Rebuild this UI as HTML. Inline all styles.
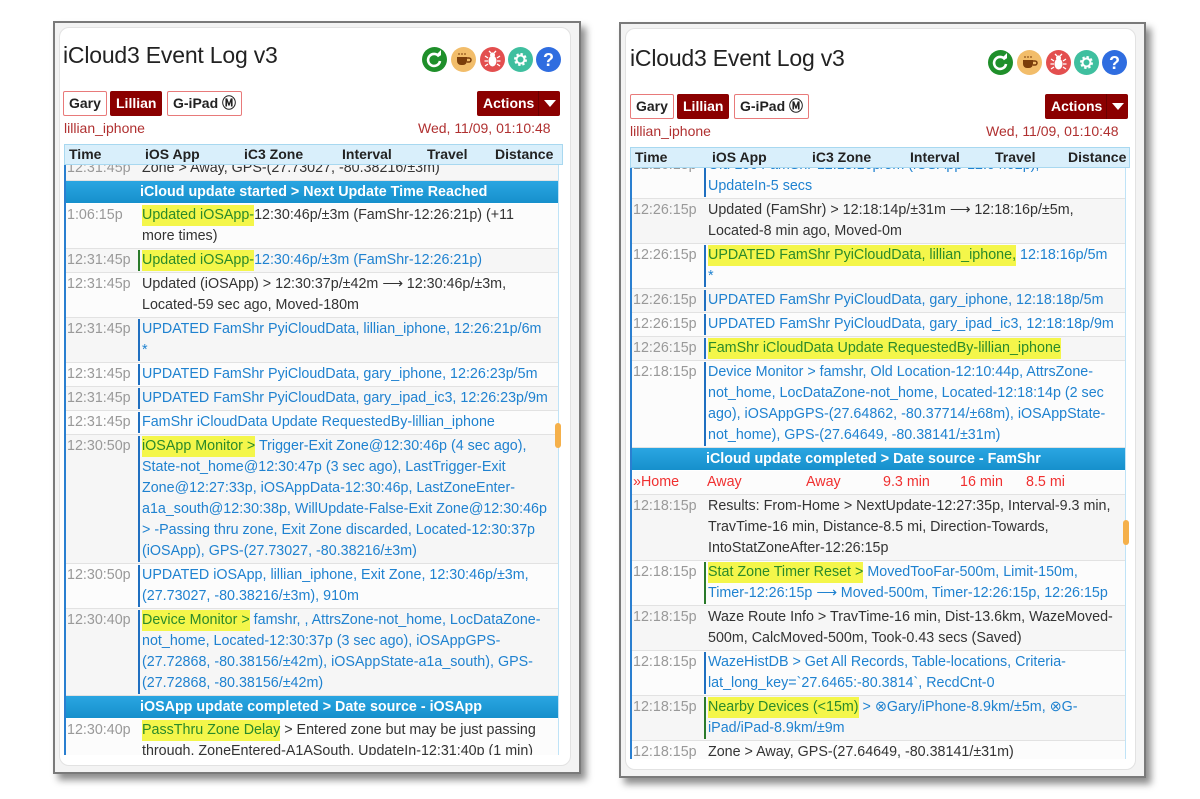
<!DOCTYPE html>
<html><head><meta charset="utf-8">
<style>
*{box-sizing:border-box;margin:0;padding:0}
body{width:1200px;height:799px;background:#fff;position:relative;overflow:hidden;font-family:"Liberation Sans",Arial,sans-serif;}
.frame{position:absolute;border:2px solid #7a7a7a;background:#f3f3f3;box-shadow:5px 6px 7px rgba(0,0,0,.45);}
.card{position:absolute;left:4px;top:4px;right:8px;bottom:6px;background:#fff;border:1px solid #e2e2e2;border-radius:10px;}
.title{position:absolute;font-size:23px;color:#222;letter-spacing:-0.2px}
.ic{position:absolute;width:25px;height:25px;border-radius:50%;}
.btn{position:absolute;height:25px;font-size:14px;font-weight:bold;line-height:23px;padding:0 5px;border-radius:2px}
.b1{background:#fff;border:1px solid #e87a7a;color:#222}
.b2{background:#8b0000;border:1px solid #8b0000;color:#fff}
.act{position:absolute;height:25px;width:83px;background:#8b0000;border-radius:2px;color:#fff;font-weight:bold;font-size:14px;line-height:25px;padding-left:6px}
.act i{position:absolute;right:0;top:0;width:22px;height:25px;border-left:1px solid #6b0000}
.act i:after{content:"";position:absolute;left:5px;top:9px;border-left:6px solid transparent;border-right:6px solid transparent;border-top:7px solid #fff}
.dev{position:absolute;font-size:14px;color:#b03030}
.date{position:absolute;font-size:14px;color:#b03030}
.hdr{position:absolute;height:21px;background:#d9effb;border:1px solid #a8d8f0;font-size:14px;font-weight:bold;color:#222;line-height:19px}
.hdr span{position:absolute;top:0}
.body{position:absolute;overflow:hidden;border-left:2px solid #2a7fd0;border-right:1px solid #bfe3f7;}
.row{display:flex;line-height:21px;padding:1px 0;border-bottom:1px solid #e2e2e2;font-size:14.3px;background:#f6f6f6}
.row.w{background:#fcfcfc}
.t{width:72px;flex:none;color:#999;padding-left:1px;white-space:nowrap}
.m{flex:1;padding-left:2px;white-space:nowrap;color:#333;border-left:2px solid transparent}
.m.bl{color:#1f82d0;border-left-color:#1f6fc0}
.m.g{border-left-color:#2a7a2a}
.hl{background:#f4f64a;color:#2a8a2a;padding:2px 0 3px}
.bar{background:linear-gradient(#2aa6e2,#1690cc);color:#fff;font-weight:bold;font-size:14.3px;line-height:21px;padding-left:74px;border-bottom:1px solid #fff;height:23px;padding-top:1px}
.red{color:#f03030;position:relative;height:24px}
.red span{position:absolute;top:1px}
.thumb{position:absolute;width:6px;height:25px;border-radius:3px;background:#f5b04a}
</style></head><body>

<!-- LEFT PANEL -->
<div class="frame" style="left:53px;top:21px;width:528px;height:753px"><div class="card"></div></div>
<div class="title" style="left:63px;top:42px">iCloud3 Event Log v3</div>
<div class="ic" style="left:422px;top:47px;background:#1f8f2a"><svg width="25" height="25" viewBox="0 0 25 25"><path d="M17 9.5A6 6 0 1 0 18 14" fill="none" stroke="#fff" stroke-width="2.6"/><path d="M13.5 8.5h5.5v-5.5z" fill="#fff"/></svg></div>
<div class="ic" style="left:451px;top:47px;background:#f2bd6a"><svg width="25" height="25" viewBox="0 0 25 25"><path d="M6 10h10v4a4 4 0 0 1-4 4h-2a4 4 0 0 1-4-4z" fill="#7a3d0a"/><path d="M16 11h2a2 2 0 0 1 0 4h-2" fill="none" stroke="#7a3d0a" stroke-width="1.5"/><path d="M8 6v2M11 6v2M14 6v2" stroke="#7a3d0a"/></svg></div>
<div class="ic" style="left:480px;top:47px;background:#e34f4f"><svg width="25" height="25" viewBox="0 0 25 25"><ellipse cx="12.5" cy="14" rx="4" ry="5.5" fill="#fff"/><circle cx="12.5" cy="8" r="2.5" fill="#fff"/><path d="M8 11l-3-2M8 14H4.5M8 17l-3 2M17 11l3-2M17 14h3.5M17 17l3 2M11 6l-2-2M14 6l2-2" stroke="#fff" stroke-width="1.3"/></svg></div>
<div class="ic" style="left:508px;top:47px;background:#3fbf9f"><svg width="25" height="25" viewBox="0 0 25 25"><circle cx="12.5" cy="12.5" r="5" fill="none" stroke="#fff" stroke-width="3" stroke-dasharray="2.2 1.7"/><circle cx="12.5" cy="12.5" r="4" fill="none" stroke="#fff" stroke-width="2"/></svg></div>
<div class="ic" style="left:536px;top:47px;background:#2f6de0"><svg width="25" height="25" viewBox="0 0 25 25"><text x="12.5" y="19" text-anchor="middle" font-family="Liberation Sans" font-weight="bold" font-size="18" fill="#fff">?</text></svg></div>
<div class="btn b1" style="left:63px;top:91px">Gary</div>
<div class="btn b2" style="left:110px;top:91px">Lillian</div>
<div class="btn b1" style="left:167px;top:91px">G-iPad Ⓜ</div>
<div class="act" style="left:477px;top:91px">Actions<i></i></div>
<div class="dev" style="left:64px;top:120px">lillian_iphone</div>
<div class="date" style="left:418px;top:120px">Wed, 11/09, 01:10:48</div>
<div class="hdr" style="left:64px;top:144px;width:499px"><span style="left:4px">Time</span><span style="left:80px">iOS App</span><span style="left:179px">iC3 Zone</span><span style="left:277px">Interval</span><span style="left:362px">Travel</span><span style="left:430px">Distance</span></div>
<div class="body" style="left:64px;top:165px;width:495px;height:590px">
<div style="margin-top:-8px">
<div class="row"><div class="t">12:31:45p</div><div class="m">Zone &gt; Away, GPS-(27.73027, -80.38216/±3m)</div></div>
<div class="bar">iCloud update started &gt; Next Update Time Reached</div>
<div class="row w"><div class="t">1:06:15p</div><div class="m"><span class="hl">Updated iOSApp-</span>12:30:46p/±3m (FamShr-12:26:21p) (+11<br>more times)</div></div>
<div class="row"><div class="t">12:31:45p</div><div class="m bl g"><span class="hl">Updated iOSApp-</span>12:30:46p/±3m (FamShr-12:26:21p)</div></div>
<div class="row w"><div class="t">12:31:45p</div><div class="m">Updated (iOSApp) &gt; 12:30:37p/±42m ⟶ 12:30:46p/±3m,<br>Located-59 sec ago, Moved-180m</div></div>
<div class="row"><div class="t">12:31:45p</div><div class="m bl">UPDATED FamShr PyiCloudData, lillian_iphone, 12:26:21p/6m<br>*</div></div>
<div class="row w"><div class="t">12:31:45p</div><div class="m bl">UPDATED FamShr PyiCloudData, gary_iphone, 12:26:23p/5m</div></div>
<div class="row"><div class="t">12:31:45p</div><div class="m bl">UPDATED FamShr PyiCloudData, gary_ipad_ic3, 12:26:23p/9m</div></div>
<div class="row w"><div class="t">12:31:45p</div><div class="m bl">FamShr iCloudData Update RequestedBy-lillian_iphone</div></div>
<div class="row"><div class="t">12:30:50p</div><div class="m bl"><span class="hl">iOSApp Monitor &gt;</span> Trigger-Exit Zone@12:30:46p (4 sec ago),<br>State-not_home@12:30:47p (3 sec ago), LastTrigger-Exit<br>Zone@12:27:33p, iOSAppData-12:30:46p, LastZoneEnter-<br>a1a_south@12:30:38p, WillUpdate-False-Exit Zone@12:30:46p<br>&gt; -Passing thru zone, Exit Zone discarded, Located-12:30:37p<br>(iOSApp), GPS-(27.73027, -80.38216/±3m)</div></div>
<div class="row w"><div class="t">12:30:50p</div><div class="m bl">UPDATED iOSApp, lillian_iphone, Exit Zone, 12:30:46p/±3m,<br>(27.73027, -80.38216/±3m), 910m</div></div>
<div class="row"><div class="t">12:30:40p</div><div class="m bl"><span class="hl">Device Monitor &gt;</span> famshr, , AttrsZone-not_home, LocDataZone-<br>not_home, Located-12:30:37p (3 sec ago), iOSAppGPS-<br>(27.72868, -80.38156/±42m), iOSAppState-a1a_south), GPS-<br>(27.72868, -80.38156/±42m)</div></div>
<div class="bar">iOSApp update completed &gt; Date source - iOSApp</div>
<div class="row w"><div class="t">12:30:40p</div><div class="m"><span class="hl">PassThru Zone Delay</span> &gt; Entered zone but may be just passing<br>through, ZoneEntered-A1ASouth, UpdateIn-12:31:40p (1 min)</div></div>
</div></div>
<div class="thumb" style="left:555px;top:423px"></div>

<!-- RIGHT PANEL -->
<div class="frame" style="left:619px;top:22px;width:527px;height:756px"><div class="card"></div></div>
<div class="title" style="left:630px;top:45px">iCloud3 Event Log v3</div>
<div class="ic" style="left:988px;top:50px;background:#1f8f2a"><svg width="25" height="25" viewBox="0 0 25 25"><path d="M17 9.5A6 6 0 1 0 18 14" fill="none" stroke="#fff" stroke-width="2.6"/><path d="M13.5 8.5h5.5v-5.5z" fill="#fff"/></svg></div>
<div class="ic" style="left:1017px;top:50px;background:#f2bd6a"><svg width="25" height="25" viewBox="0 0 25 25"><path d="M6 10h10v4a4 4 0 0 1-4 4h-2a4 4 0 0 1-4-4z" fill="#7a3d0a"/><path d="M16 11h2a2 2 0 0 1 0 4h-2" fill="none" stroke="#7a3d0a" stroke-width="1.5"/><path d="M8 6v2M11 6v2M14 6v2" stroke="#7a3d0a"/></svg></div>
<div class="ic" style="left:1046px;top:50px;background:#e34f4f"><svg width="25" height="25" viewBox="0 0 25 25"><ellipse cx="12.5" cy="14" rx="4" ry="5.5" fill="#fff"/><circle cx="12.5" cy="8" r="2.5" fill="#fff"/><path d="M8 11l-3-2M8 14H4.5M8 17l-3 2M17 11l3-2M17 14h3.5M17 17l3 2M11 6l-2-2M14 6l2-2" stroke="#fff" stroke-width="1.3"/></svg></div>
<div class="ic" style="left:1074px;top:50px;background:#3fbf9f"><svg width="25" height="25" viewBox="0 0 25 25"><circle cx="12.5" cy="12.5" r="5" fill="none" stroke="#fff" stroke-width="3" stroke-dasharray="2.2 1.7"/><circle cx="12.5" cy="12.5" r="4" fill="none" stroke="#fff" stroke-width="2"/></svg></div>
<div class="ic" style="left:1102px;top:50px;background:#2f6de0"><svg width="25" height="25" viewBox="0 0 25 25"><text x="12.5" y="19" text-anchor="middle" font-family="Liberation Sans" font-weight="bold" font-size="18" fill="#fff">?</text></svg></div>
<div class="btn b1" style="left:630px;top:94px">Gary</div>
<div class="btn b2" style="left:677px;top:94px">Lillian</div>
<div class="btn b1" style="left:734px;top:94px">G-iPad Ⓜ</div>
<div class="act" style="left:1045px;top:94px">Actions<i></i></div>
<div class="dev" style="left:630px;top:123px">lillian_iphone</div>
<div class="date" style="left:986px;top:123px">Wed, 11/09, 01:10:48</div>
<div class="hdr" style="left:630px;top:147px;width:500px"><span style="left:4px">Time</span><span style="left:81px">iOS App</span><span style="left:181px">iC3 Zone</span><span style="left:279px">Interval</span><span style="left:364px">Travel</span><span style="left:437px">Distance</span></div>
<div class="body" style="left:630px;top:168px;width:496px;height:591px">
<div style="margin-top:-14px">
<div class="row w"><div class="t">12:26:15p</div><div class="m bl">Old Loc FamShr-12:18:16p/5m (iOSApp-12:04:02p),<br>UpdateIn-5 secs</div></div>
<div class="row"><div class="t">12:26:15p</div><div class="m">Updated (FamShr) &gt; 12:18:14p/±31m ⟶ 12:18:16p/±5m,<br>Located-8 min ago, Moved-0m</div></div>
<div class="row w"><div class="t">12:26:15p</div><div class="m bl"><span class="hl">UPDATED FamShr PyiCloudData, lillian_iphone,</span> 12:18:16p/5m<br>*</div></div>
<div class="row"><div class="t">12:26:15p</div><div class="m bl">UPDATED FamShr PyiCloudData, gary_iphone, 12:18:18p/5m</div></div>
<div class="row w"><div class="t">12:26:15p</div><div class="m bl">UPDATED FamShr PyiCloudData, gary_ipad_ic3, 12:18:18p/9m</div></div>
<div class="row"><div class="t">12:26:15p</div><div class="m bl"><span class="hl">FamShr iCloudData Update RequestedBy-lillian_iphone</span></div></div>
<div class="row w"><div class="t">12:18:15p</div><div class="m bl">Device Monitor &gt; famshr, Old Location-12:10:44p, AttrsZone-<br>not_home, LocDataZone-not_home, Located-12:18:14p (2 sec<br>ago), iOSAppGPS-(27.64862, -80.37714/±68m), iOSAppState-<br>not_home), GPS-(27.64649, -80.38141/±31m)</div></div>
<div class="bar">iCloud update completed &gt; Date source - FamShr</div>
<div class="row w red"><span style="left:1px">»Home</span><span style="left:75px">Away</span><span style="left:174px">Away</span><span style="left:251px">9.3 min</span><span style="left:328px">16 min</span><span style="left:394px">8.5 mi</span></div>
<div class="row"><div class="t">12:18:15p</div><div class="m">Results: From-Home &gt; NextUpdate-12:27:35p, Interval-9.3 min,<br>TravTime-16 min, Distance-8.5 mi, Direction-Towards,<br>IntoStatZoneAfter-12:26:15p</div></div>
<div class="row w"><div class="t">12:18:15p</div><div class="m bl g"><span class="hl">Stat Zone Timer Reset &gt;</span> MovedTooFar-500m, Limit-150m,<br>Timer-12:26:15p ⟶ Moved-500m, Timer-12:26:15p, 12:26:15p</div></div>
<div class="row"><div class="t">12:18:15p</div><div class="m">Waze Route Info &gt; TravTime-16 min, Dist-13.6km, WazeMoved-<br>500m, CalcMoved-500m, Took-0.43 secs (Saved)</div></div>
<div class="row w"><div class="t">12:18:15p</div><div class="m bl">WazeHistDB &gt; Get All Records, Table-locations, Criteria-<br>lat_long_key=`27.6465:-80.3814`, RecdCnt-0</div></div>
<div class="row"><div class="t">12:18:15p</div><div class="m bl g"><span class="hl">Nearby Devices (&lt;15m)</span> &gt; ⊗Gary/iPhone-8.9km/±5m, ⊗G-<br>iPad/iPad-8.9km/±9m</div></div>
<div class="row w"><div class="t">12:18:15p</div><div class="m">Zone &gt; Away, GPS-(27.64649, -80.38141/±31m)</div></div>
</div></div>
<div class="thumb" style="left:1123px;top:520px"></div>
</body></html>
